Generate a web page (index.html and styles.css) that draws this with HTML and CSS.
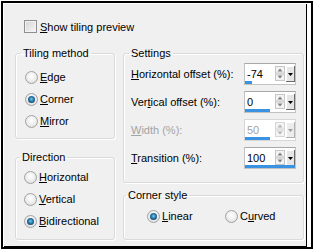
FILE: index.html
```html
<!DOCTYPE html>
<html lang="en">
<head>
    <meta charset="UTF-8">
    <title>Tiling</title>
    <link rel="stylesheet" href="styles.css">
</head>
<body>
    <div class="frame">
        <div class="dialog">
            <div class="check"><span class="box"></span><span><u>S</u>how tiling preview</span></div>

            <div class="columns">
                <div class="col">
                    <fieldset class="group tiling">
                        <legend>Tiling method</legend>
                        <div class="radio"><span class="dot"></span><span><u>E</u>dge</span></div>
                        <div class="radio"><span class="dot on"></span><span><u>C</u>orner</span></div>
                        <div class="radio"><span class="dot"></span><span><u>M</u>irror</span></div>
                    </fieldset>

                    <fieldset class="group direction">
                        <legend>Direction</legend>
                        <div class="radio"><span class="dot"></span><span><u>H</u>orizontal</span></div>
                        <div class="radio"><span class="dot"></span><span><u>V</u>ertical</span></div>
                        <div class="radio"><span class="dot on"></span><span><u>B</u>idirectional</span></div>
                    </fieldset>
                </div>

                <div class="col">
                    <fieldset class="group settings">
                        <legend>Settings</legend>
                        <div class="row">
                            <span><u>H</u>orizontal offset (%):</span>
                            <div class="spin">
                                <span class="value">-74</span>
                                <svg class="arrows" width="10" height="15" viewBox="0 0 10 15"><rect x="0.5" y="0.5" width="9" height="6.5" fill="#f3f3f3" stroke="#c6c6c6"/><rect x="0.5" y="8" width="9" height="6.5" fill="#f3f3f3" stroke="#c6c6c6"/><path d="M2.5 5.5h5L5 2.5z" fill="#808080"/><path d="M2.5 9.5h5L5 12.5z" fill="#808080"/></svg>
                                <svg class="drop" width="9" height="16" viewBox="0 0 9 16"><rect width="9" height="16" fill="#e6e6e6"/><path d="M0.5 16V0.5H8" stroke="#fff" fill="none"/><path d="M8.5 0v16M0 15.5h9" stroke="#6a6a6a"/><path d="M2 7h5l-2.5 3z" fill="#000"/></svg>
                                <span class="bar" style="width:13%"></span>
                            </div>
                        </div>
                        <div class="row">
                            <span>Ver<u>t</u>ical offset (%):</span>
                            <div class="spin">
                                <span class="value">0</span>
                                <svg class="arrows" width="10" height="15" viewBox="0 0 10 15"><rect x="0.5" y="0.5" width="9" height="6.5" fill="#f3f3f3" stroke="#c6c6c6"/><rect x="0.5" y="8" width="9" height="6.5" fill="#f3f3f3" stroke="#c6c6c6"/><path d="M2.5 5.5h5L5 2.5z" fill="#808080"/><path d="M2.5 9.5h5L5 12.5z" fill="#808080"/></svg>
                                <svg class="drop" width="9" height="16" viewBox="0 0 9 16"><rect width="9" height="16" fill="#e6e6e6"/><path d="M0.5 16V0.5H8" stroke="#fff" fill="none"/><path d="M8.5 0v16M0 15.5h9" stroke="#6a6a6a"/><path d="M2 7h5l-2.5 3z" fill="#000"/></svg>
                                <span class="bar" style="width:50%"></span>
                            </div>
                        </div>
                        <div class="row disabled">
                            <span><u>W</u>idth (%):</span>
                            <div class="spin">
                                <span class="value">50</span>
                                <svg class="arrows" width="10" height="15" viewBox="0 0 10 15"><rect x="0.5" y="0.5" width="9" height="6.5" fill="#f3f3f3" stroke="#d6d6d6"/><rect x="0.5" y="8" width="9" height="6.5" fill="#f3f3f3" stroke="#d6d6d6"/><path d="M2.5 5.5h5L5 2.5z" fill="#b4b4b4"/><path d="M2.5 9.5h5L5 12.5z" fill="#b4b4b4"/></svg>
                                <svg class="drop" width="9" height="16" viewBox="0 0 9 16"><rect width="9" height="16" fill="#ececec"/><path d="M0.5 16V0.5H8" stroke="#fff" fill="none"/><path d="M8.5 0v16M0 15.5h9" stroke="#b0b0b0"/><path d="M2 7h5l-2.5 3z" fill="#a0a0a0"/></svg>
                                <span class="bar" style="width:50%"></span>
                            </div>
                        </div>
                        <div class="row last">
                            <span><u>T</u>ransition (%):</span>
                            <div class="spin">
                                <span class="value">100</span>
                                <svg class="arrows" width="10" height="15" viewBox="0 0 10 15"><rect x="0.5" y="0.5" width="9" height="6.5" fill="#f3f3f3" stroke="#c6c6c6"/><rect x="0.5" y="8" width="9" height="6.5" fill="#f3f3f3" stroke="#c6c6c6"/><path d="M2.5 5.5h5L5 2.5z" fill="#808080"/><path d="M2.5 9.5h5L5 12.5z" fill="#808080"/></svg>
                                <svg class="drop" width="9" height="16" viewBox="0 0 9 16"><rect width="9" height="16" fill="#e6e6e6"/><path d="M0.5 16V0.5H8" stroke="#fff" fill="none"/><path d="M8.5 0v16M0 15.5h9" stroke="#6a6a6a"/><path d="M2 7h5l-2.5 3z" fill="#000"/></svg>
                                <span class="bar" style="width:100%"></span>
                            </div>
                        </div>
                    </fieldset>

                    <fieldset class="group corner">
                        <legend>Corner style</legend>
                        <div class="inline">
                            <div class="radio"><span class="dot on"></span><span><u>L</u>inear</span></div>
                            <div class="radio"><span class="dot"></span><span>C<u>u</u>rved</span></div>
                        </div>
                    </fieldset>
                </div>
            </div>
        </div>
    </div>
</body>
</html>
```

FILE: styles.css
```css
* {
    box-sizing: border-box;
}

body {
    margin: 0;
    background-color: #fff;
    font-family: "Liberation Sans", Arial, sans-serif;
    font-size: 11px;
    color: #000;
}

.frame {
    margin: 1px 0 0 1px;
    width: 312px;
    height: 248px;
    border: 2px solid #000;
    padding: 1px 4px 0 1px;
    background-color: #fff;
}

.dialog {
    height: 100%;
    background-color: #f0f0f0;
    border-right: 1px solid #000;
    border-bottom: 1px solid #000;
    padding: 15px 2px 0 11px;
}

.check {
    display: flex;
    align-items: center;
    height: 15px;
    padding-left: 9px;
}

.box {
    width: 13px;
    height: 13px;
    margin-right: 3px;
    border: 1px solid #8f8f8f;
    background: linear-gradient(135deg, #d4d4d4, #f7f7f7);
    box-shadow: inset 0 0 0 1px #f2f2f2;
}

.columns {
    display: grid;
    grid-template-columns: 100px 181px;
    column-gap: 8px;
    margin-top: 13px;
}

.col {
    display: flex;
    flex-direction: column;
}

.group {
    margin: 0;
    min-width: 0;
    border: 1px solid #dadada;
    border-radius: 3px;
    box-shadow: inset 1px 1px 0 #fff, 1px 1px 0 #fff;
}

.group legend {
    padding: 0 2px;
    line-height: 13px;
}

.tiling {
    height: 92px;
    padding: 6px 0 0 9px;
}

.tiling legend {
    margin-left: -4px;
}

.direction {
    height: 89px;
    margin-top: 12px;
    padding: 2px 0 0 8px;
}

.direction legend {
    margin-left: -4px;
}

.settings {
    height: 136px;
    padding: 3px 7px 0 7px;
}

.settings legend {
    margin-left: -2px;
}

.corner {
    height: 51px;
    margin-top: 6px;
    padding: 3px 0 0 3px;
}

.corner legend {
    margin-left: -1px;
}

.radio {
    display: flex;
    align-items: center;
    height: 22px;
}

.dot {
    position: relative;
    width: 13px;
    height: 13px;
    margin-right: 2px;
    border: 1px solid #a2a2a2;
    border-radius: 50%;
    background: radial-gradient(circle at 50% 40%, #fff 0, #f0f0f0 45%, #d6d6d6 100%);
}

.dot.on::after {
    content: "";
    position: absolute;
    left: 2px;
    top: 2px;
    width: 7px;
    height: 7px;
    border-radius: 50%;
    background: radial-gradient(circle at 50% 45%, #7fd0f0 0, #2f86b8 35%, #123f62 80%);
}

.inline {
    display: flex;
    padding-left: 20px;
}

.inline .radio {
    width: 82px;
}

.row {
    display: flex;
    align-items: center;
    justify-content: space-between;
    height: 22px;
    margin-bottom: 6px;
}

.row.last {
    margin-top: 4px;
}

.spin {
    display: grid;
    grid-template-columns: 30px 10px 10px;
    grid-template-rows: 15px 3px;
    align-items: center;
    width: 52px;
    height: 22px;
    padding-top: 2px;
    border: 1px solid #c2c2c2;
    border-top-color: #a8a8a8;
    background-color: #fff;
}

.value {
    padding-left: 2px;
}

.drop {
    margin-left: 1px;
    align-self: start;
}

.bar {
    grid-column: 1 / 4;
    height: 3px;
    background-color: #3a92e2;
}

.disabled {
    color: #a3a3a3;
}

.disabled .spin {
    border-color: #d6d6d6;
}
```
